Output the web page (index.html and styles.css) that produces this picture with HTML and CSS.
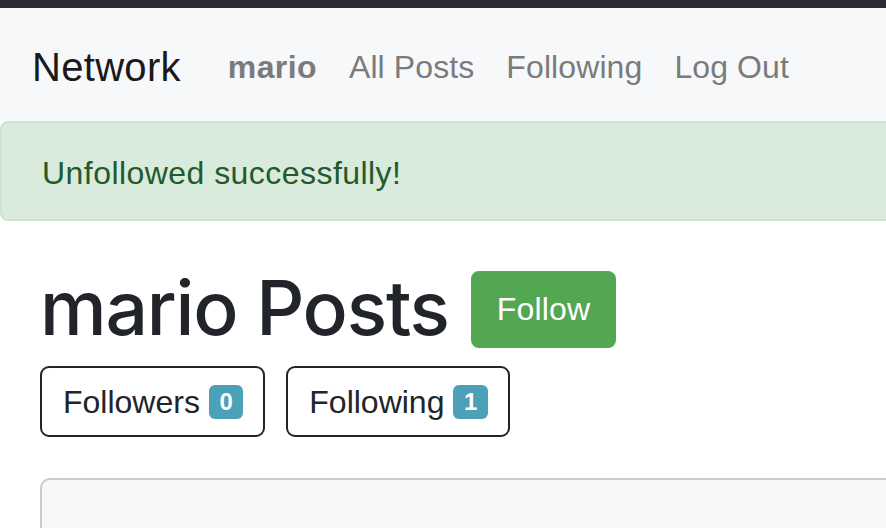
FILE: index.html
```html
<!DOCTYPE html>
<html lang="en">
<head>
<meta charset="utf-8">
<title>Network</title>
<link rel="stylesheet" href="styles.css">
</head>
<body>
<div class="chrome"></div>
<div class="page">
  <nav class="navbar">
    <a class="brand" href="#">Network</a>
    <ul class="nav">
      <li><a class="nav-link user" href="#">mario</a></li>
      <li><a class="nav-link" href="#">All Posts</a></li>
      <li><a class="nav-link" href="#">Following</a></li>
      <li><a class="nav-link" href="#">Log Out</a></li>
    </ul>
  </nav>
  <div class="alert">Unfollowed successfully!</div>
  <main class="content">
    <div class="title-row">
      <h1 class="title">mario Posts</h1>
      <button class="btn-follow" type="button">Follow</button>
    </div>
    <div class="counts">
      <button class="btn-count" type="button">Followers <span class="badge">0</span></button>
      <button class="btn-count" type="button">Following <span class="badge">1</span></button>
    </div>
    <div class="card"></div>
  </main>
</div>
</body>
</html>
```

FILE: styles.css
```css
html, body {
  margin: 0;
  padding: 0;
  overflow: hidden;
  background: #ffffff;
}
body {
  font-family: "Liberation Sans", Arial, sans-serif;
  color: #212529;
  height: 528px;
}
.chrome {
  height: 8px;
  background: #2b2a35;
}
.page {
  width: 1100px;
}
.navbar {
  display: flex;
  align-items: center;
  background: #f7f8fa;
  padding: 19px 32px 14px;
}
.brand {
  font-size: 40px;
  line-height: 60px;
  padding: 10px 0;
  margin-right: 31px;
  color: #1a1a1a;
  text-decoration: none;
  letter-spacing: 0.3px;
}
.nav {
  display: flex;
  list-style: none;
  margin: 0;
  padding: 0;
}
.nav-link {
  display: block;
  font-size: 32px;
  line-height: 48px;
  padding: 16px;
  color: #7b7b7c;
  text-decoration: none;
  letter-spacing: 0.1px;
}
.nav-link.user {
  font-weight: bold;
  letter-spacing: 0.4px;
}
.alert {
  background: #d8ebdc;
  border: 2px solid #cbe4d1;
  border-radius: 8px;
  color: #24592a;
  font-size: 32px;
  line-height: 48px;
  padding: 26px 40px 22px 40px;
  letter-spacing: 0.45px;
}
.content {
  padding: 0 0 0 40px;
}
.title-row {
  display: flex;
  align-items: center;
  margin-top: 41px;
}
.title {
  font-family: Inter, "Liberation Sans", sans-serif;
  font-size: 75px;
  line-height: 92px;
  font-weight: 500;
  margin: 0 22px 0 0;
  color: #212529;
  letter-spacing: -1.2px;
}
.btn-follow {
  font-family: inherit;
  font-size: 32px;
  line-height: 48px;
  padding: 12px 24px 13px;
  border: 2px solid #53a652;
  border-radius: 8px;
  background: #53a652;
  color: #ffffff;
  margin-top: 2px;
  letter-spacing: 0.2px;
}
.counts {
  display: flex;
  gap: 21px;
  margin-top: 12px;
}
.btn-count {
  display: flex;
  align-items: center;
  gap: 9px;
  font-family: inherit;
  font-size: 32px;
  line-height: 48px;
  padding: 10px 20px 9px 21px;
  border: 2px solid #212529;
  border-radius: 9px;
  background: #ffffff;
  color: #212529;
}
.badge {
  display: inline-flex;
  align-items: center;
  justify-content: center;
  height: 34px;
  box-sizing: border-box;
  padding: 0 10.5px;
  border-radius: 6px;
  background: #4ba1b7;
  color: #ffffff;
  font-size: 24px;
  font-weight: bold;
  line-height: 1;
}
.card {
  margin-top: 41px;
  height: 200px;
  background: #f8f8f8;
  border: 2px solid #cbcbcb;
  border-radius: 10px;
}
```
